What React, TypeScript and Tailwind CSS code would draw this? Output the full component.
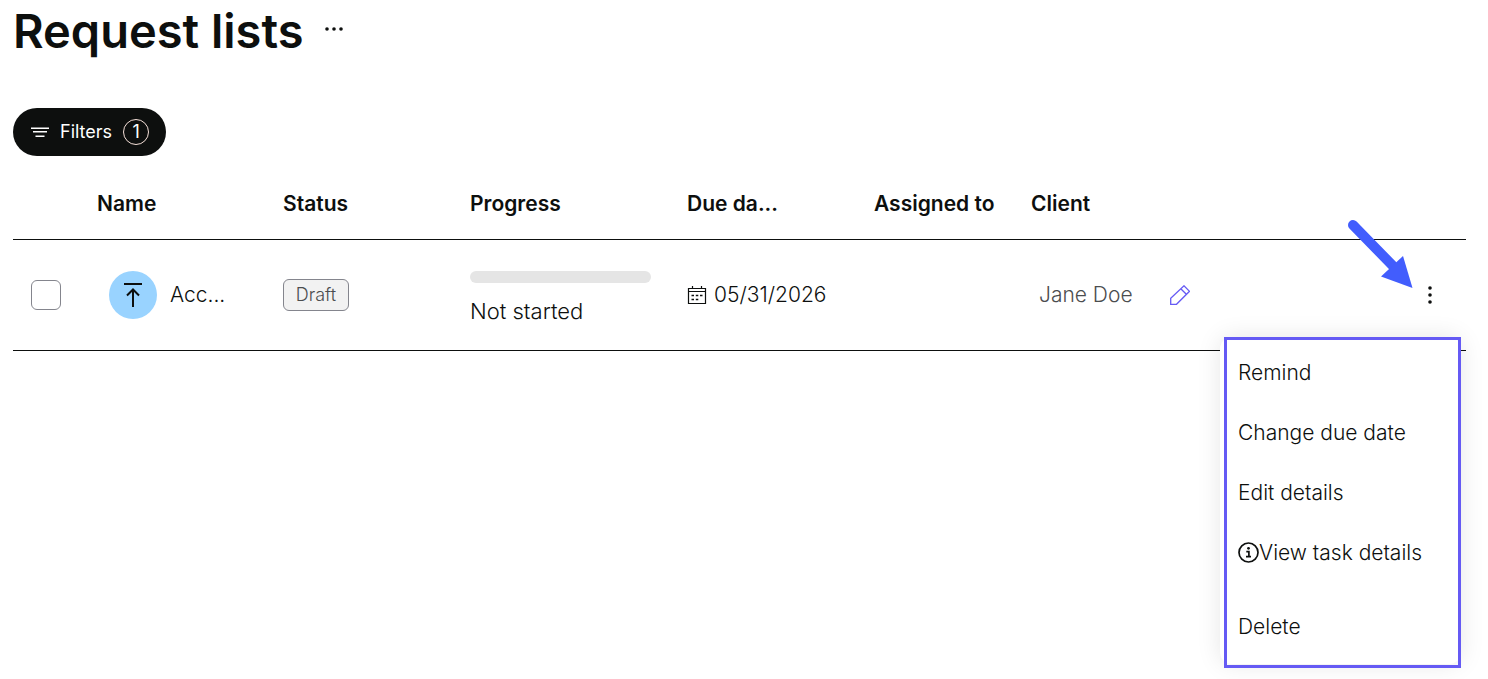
import { useState } from "react";

const columns = [
  { label: "", width: "w-[66px]" },
  { label: "Name", width: "w-[186px]" },
  { label: "Status", width: "w-[187px]" },
  { label: "Progress", width: "w-[217px]" },
  { label: "Due da...", width: "w-[187px]" },
  { label: "Assigned to", width: "w-[157px]" },
  { label: "Client", width: "" },
  { label: "", width: "w-[72px]" },
];

const menuItems = [
  { label: "Remind" },
  { label: "Change due date" },
  { label: "Edit details" },
  { label: "View task details", icon: <InfoIcon /> },
  { label: "Delete", spaced: true },
];

function FilterIcon() {
  return (
    <svg className="h-5 w-5" viewBox="0 0 20 20" fill="none" stroke="currentColor" strokeWidth="1.5">
      <path d="M1 6.250h18M3 9.750h14M5.500 14.250h9" />
    </svg>
  );
}

function UploadIcon() {
  return (
    <svg className="h-6 w-6" viewBox="0 0 24 24" fill="none" stroke="currentColor" strokeWidth="2">
      <path d="M3 1h18M12 24V6.5M6 12.5l6-6 6 6" />
    </svg>
  );
}

function CalendarIcon() {
  return (
    <svg className="h-5 w-5 shrink-0" viewBox="0 0 20 20" fill="none" stroke="currentColor">
      <path d="M1.500 3.500h17v15h-17zM1.500 6.500h17M5.500 1v2.500M14.500 1v2.500" strokeWidth="1.2" />
      <path d="M4.500 10.500h2.500M8.800 10.500h2.500M13 10.500h2.500M4.500 14.500h2.500M8.800 14.500h2.500" strokeWidth="1.5" />
    </svg>
  );
}

function PencilIcon() {
  return (
    <svg className="h-5 w-5" viewBox="0 0 20 20" fill="none" stroke="currentColor" strokeWidth="1.3">
      <path d="M.7 19.3v-6L14 .8l5.5 5.5L6.5 19.3zM10.8 3.8l5.5 5.5" />
    </svg>
  );
}

function InfoIcon() {
  return (
    <svg className="h-[21px] w-[21px] shrink-0" viewBox="0 0 21 21" fill="none" stroke="currentColor">
      <circle cx="10.5" cy="10.5" r="9.5" strokeWidth="1.7" />
      <circle cx="10.5" cy="6.3" r="1.4" fill="currentColor" stroke="none" />
      <path d="M8.3 9.7h2.6v5M8 14.7h5" strokeWidth="1.7" />
    </svg>
  );
}

function PointerArrow() {
  return (
    <svg
      className="pointer-events-none absolute -top-[21px] right-[52px] h-[70px] w-[67px]"
      viewBox="0 0 67 70"
      fill="#425dfd"
      stroke="none"
    >
      <path d="M6 6l40 41" stroke="#425dfd" strokeWidth="10" strokeLinecap="round" />
      <path d="M56 37l9.500 32-31.500-11.500z" />
    </svg>
  );
}

function RowMenu() {
  return (
    <div className="absolute right-[5px] top-[97px] z-10 w-[237px] text-left">
      <div className="absolute -left-1 bottom-1 right-0 top-0 rounded-xl bg-white shadow-[0_0_24px_rgba(0,0,0,0.1)]" />
      <div role="menu" className="relative border-[3px] border-[#655af4] pb-2 pt-[3px]">
        {menuItems.map((item) => (
          <button
            key={item.label}
            type="button"
            role="menuitem"
            className={`flex h-[60px] w-full items-center whitespace-nowrap pl-[11px] text-left ${item.spaced ? "mt-3.5" : ""}`}
          >
            {item.icon}
            {item.label}
          </button>
        ))}
      </div>
    </div>
  );
}

export default function App() {
  const [menuOpen, setMenuOpen] = useState(true);

  return (
    <main className="min-h-screen bg-white pl-[13px] pr-[22px] font-['Inter',sans-serif] text-[21px] leading-8 font-light text-[#0d0f0e]">
      <header className="flex items-center gap-[21px] pt-[3px]">
        <h1 className="text-[47px] leading-[56px] font-semibold">Request lists</h1>
        <button type="button" aria-label="More options">
          <svg className="h-5 w-5" viewBox="0 0 20 20" fill="currentColor">
            <circle cx="3" cy="8" r="1.8" />
            <circle cx="10" cy="8" r="1.8" />
            <circle cx="17" cy="8" r="1.8" />
          </svg>
        </button>
      </header>

      <button
        type="button"
        className="mt-[49px] flex h-12 items-center rounded-full bg-[#0d0f0e] px-[17px] text-[18px] font-normal text-white"
      >
        <FilterIcon />
        <span className="ml-2.5">Filters</span>
        <span className="ml-[11px] flex h-[26px] w-[26px] items-center justify-center rounded-full border border-[#f5e0d8]">
          1
        </span>
      </button>

      <table className="mt-3 w-full table-fixed border-collapse text-left">
        <thead>
          <tr className="h-[71px] border-b border-[#0d0f0e]">
            {columns.map((col, index) => (
              <th key={index} className={`whitespace-nowrap px-[18px] pt-0.5 font-semibold ${col.width}`}>
                {col.label}
              </th>
            ))}
          </tr>
        </thead>
        <tbody>
          <tr className="h-[111px] border-b border-[#0d0f0e]">
            <td className="pl-[18px]">
              <input
                type="checkbox"
                aria-label="Select request"
                className="block h-[30px] w-[30px] appearance-none rounded-md border border-[#84858d] bg-white checked:bg-[#655af4]"
              />
            </td>
            <td className="pl-[30px]">
              <div className="flex items-center gap-[13px]">
                <span className="flex h-12 w-12 shrink-0 items-center justify-center rounded-full bg-[#99d3ff]">
                  <UploadIcon />
                </span>
                <span>Acc...</span>
              </div>
            </td>
            <td className="pl-[18px]">
              <span className="flex h-8 w-[66px] items-center justify-center rounded-md border border-[#84858d] bg-[#f2f2f2] text-[18px] text-[#4b4d4f]">
                Draft
              </span>
            </td>
            <td className="px-[18px] pt-2">
              <div className="h-3 rounded-full bg-[#e5e5e5]" />
              <div className="mt-3 text-[22px]">Not started</div>
            </td>
            <td className="pl-[18px]">
              <div className="flex items-center gap-[7px]">
                <CalendarIcon />
                <span>05/31/2026</span>
              </div>
            </td>
            <td />
            <td className="pl-[26px]">
              <div className="flex items-center gap-[37px]">
                <span className="text-[#4b4d4f]">Jane Doe</span>
                <button type="button" aria-label="Edit client" className="text-[#655af4]">
                  <PencilIcon />
                </button>
              </div>
            </td>
            <td className="relative">
              <button
                type="button"
                aria-label="Row actions"
                aria-expanded={menuOpen}
                onClick={() => setMenuOpen(!menuOpen)}
                className="ml-auto mr-[26px] block"
              >
                <svg className="h-5 w-5" viewBox="0 0 20 20" fill="currentColor">
                  <circle cx="10" cy="3" r="1.8" />
                  <circle cx="10" cy="10" r="1.8" />
                  <circle cx="10" cy="17" r="1.8" />
                </svg>
              </button>
              <PointerArrow />
              {menuOpen && <RowMenu />}
            </td>
          </tr>
        </tbody>
      </table>
    </main>
  );
}
